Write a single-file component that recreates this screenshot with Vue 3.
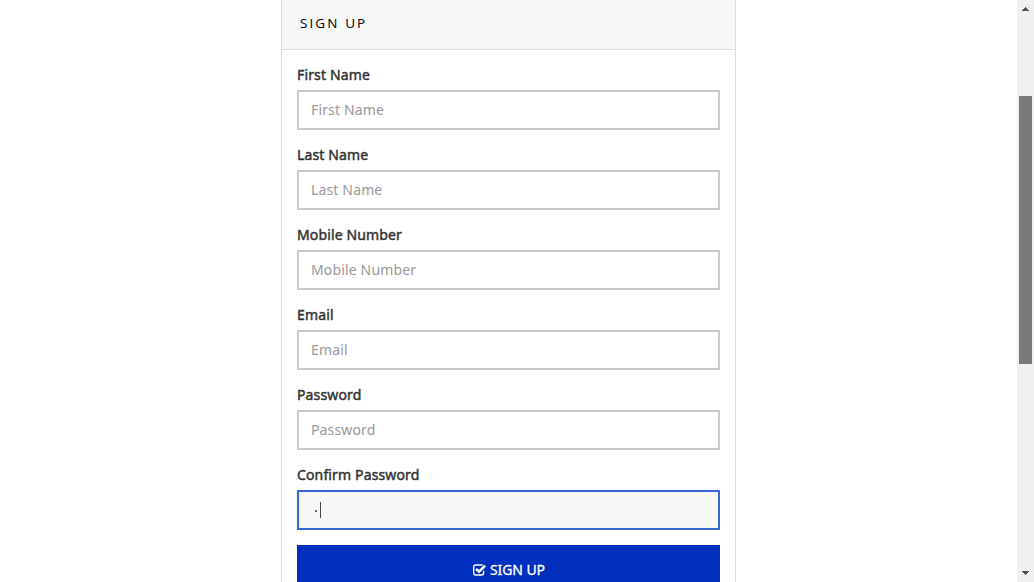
<script setup>
const fields = [
  { label: 'First Name' },
  { label: 'Last Name' },
  { label: 'Mobile Number' },
  { label: 'Email' },
  { label: 'Password' },
  { label: 'Confirm Password', active: true },
]
</script>

<template>
  <div class="page">
    <main class="content">
      <section class="panel">
        <header class="head">SIGN UP</header>
        <form class="form">
          <div v-for="f in fields" :key="f.label" class="group">
            <label class="label">{{ f.label }}</label>
            <div v-if="f.active" class="field active"><i class="dot"></i><i class="caret"></i></div>
            <div v-else class="field">{{ f.label }}</div>
          </div>
          <div class="submit">
            <svg width="14" height="12" viewBox="0 0 14 12" fill="none">
              <path d="M11.6 6.8V9.1a1.9 1.9 0 0 1-1.9 1.9H3.6A1.9 1.9 0 0 1 1.7 9.1V2.9A1.9 1.9 0 0 1 3.6 1H9.7q.6 0 1 .2" stroke="#fff" stroke-width="1.4" />
              <path d="M4.1 4.8 7 7.7 13.1 1.7" stroke="#fff" stroke-width="2.4" />
            </svg>
            <span>SIGN UP</span>
          </div>
        </form>
      </section>
    </main>
    <aside class="scrollbar">
      <svg class="arrow" width="7" height="4" viewBox="0 0 7 4" shape-rendering="crispEdges"><path d="M3 0h1v1h1v1h1v1h1v1H0V3h1V2h1V1h1z" fill="#505050" /></svg>
      <div class="thumb"></div>
      <svg class="arrow down" width="7" height="4" viewBox="0 0 7 4" shape-rendering="crispEdges"><path d="M0 0h7v1H6v1H5v1H4v1H3V3H2V2H1V1H0z" fill="#505050" /></svg>
    </aside>
  </div>
</template>

<style>
body { margin: 0; overflow: hidden; }
</style>

<style scoped>
.page {
  display: flex;
  height: 582px;
  overflow: hidden;
  background: #fff;
  font-family: "Noto Sans", "Open Sans", sans-serif;
  font-size: 14px;
}
.content { flex: 1; display: flex; justify-content: center; }
.panel {
  box-sizing: border-box;
  width: 455px;
  height: 640px;
  border: solid #ddd;
  border-width: 0 1px;
}
.head {
  box-sizing: border-box;
  height: 50px;
  padding: 13px 18px 0;
  border-bottom: 1px solid #ddd;
  background: #f7f7f7;
  color: #000;
  font-family: "Open Sans", "Noto Sans", sans-serif;
  font-size: 13.5px;
  line-height: 20px;
  letter-spacing: 2.1px;
}
.form { padding: 15px 15px 0; }
.group { height: 80px; }
.label {
  display: block;
  height: 25px;
  line-height: 20px;
  color: #333;
  letter-spacing: 0.14px;
  -webkit-text-stroke: 0.45px #333;
}
.field {
  box-sizing: border-box;
  display: flex;
  align-items: center;
  height: 40px;
  padding: 0 0 2px 12px;
  border: 2px solid #ccc;
  color: #999;
  letter-spacing: 0.15px;
}
.active { padding-bottom: 0; border-color: #3369d6; background: #f7f7f7; }
.dot { width: 2px; height: 2px; margin: 2px 0 0 4px; background: #666; }
.caret { width: 1px; height: 16px; margin-left: 3px; background: #444; }
.submit {
  display: flex;
  align-items: center;
  justify-content: center;
  gap: 4px;
  height: 50px;
  background: #0030bd;
  color: #fff;
  line-height: 20px;
  -webkit-text-stroke: 0.3px #fff;
}
.submit span { letter-spacing: -0.1px; }
.submit svg { display: block; }
.scrollbar {
  box-sizing: border-box;
  width: 17px;
  display: flex;
  flex-direction: column;
  background: #f0f0f0;
}
.arrow { flex: none; margin: 7px 0 0 5px; }
.thumb { width: 13px; height: 268px; margin: 85px 0 0 2px; background: #7a7a7a; }
.down { margin-top: 207px; }
</style>
